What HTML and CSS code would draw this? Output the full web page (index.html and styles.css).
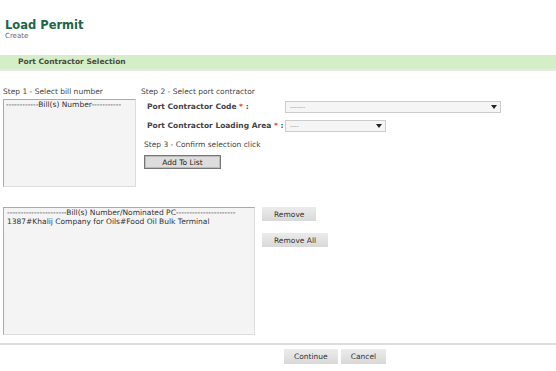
FILE: index.html
```html
<!DOCTYPE html>
<html lang="en">
<head>
  <meta charset="UTF-8">
  <title>Load Permit</title>
  <link rel="stylesheet" href="styles.css">
</head>
<body>
  <div class="page-head">
    <h1>Load Permit</h1>
    <div class="subtitle">Create</div>
  </div>

  <div class="section-bar">Port Contractor Selection</div>

  <div class="select-row">
    <div class="step1">
      <div class="step-label">Step 1 - Select bill number</div>
      <div class="listbox small-list">
        <div class="list-item">------------Bill(s) Number-----------</div>
      </div>
    </div>
    <div class="step2">
      <div class="step-label">Step 2 - Select port contractor</div>
      <div class="field-row">
        <label class="field-label">Port Contractor Code <span class="req">*</span> :</label>
        <div class="dropdown wide"><span>-------</span><span class="arrow"></span></div>
      </div>
      <div class="field-row">
        <label class="field-label">Port Contractor Loading Area <span class="req">*</span> :</label>
        <div class="dropdown narrow"><span>----</span><span class="arrow"></span></div>
      </div>
      <div class="step-label step3">Step 3 - Confirm selection click</div>
      <button class="add-btn">Add To List</button>
    </div>
  </div>

  <div class="result-row">
    <div class="listbox big-list">
      <div class="list-item">----------------------Bill(s) Number/Nominated PC----------------------</div>
      <div class="list-item">1387#Khalij Company for Oils#Food Oil Bulk Terminal</div>
    </div>
    <div class="side-btns">
      <button class="gray-btn">Remove</button>
      <button class="gray-btn">Remove All</button>
    </div>
  </div>

  <div class="footer">
    <button class="gray-btn">Continue</button>
    <button class="gray-btn">Cancel</button>
  </div>
</body>
</html>
```

FILE: styles.css
```css
body {
  margin: 0;
  font-family: "DejaVu Sans", Verdana, sans-serif;
  font-size: 7.5px;
  color: #333;
  background: white;
}
.page-head {
  padding: 18px 5px 0;
  height: 37px;
}
h1 {
  margin: 0;
  font-size: 11.5px;
  line-height: 14px;
  color: #1d6647;
  font-weight: bold;
}
.subtitle {
  font-size: 7px;
  color: #666;
  line-height: 8px;
}
.section-bar {
  background: #d4eec7;
  color: #4a4a40;
  font-weight: bold;
  font-size: 7.5px;
  line-height: 14px;
  padding-left: 18px;
  border-bottom: 2px solid #e8e8e8;
}
.select-row {
  display: flex;
  padding: 16px 0 0 3px;
  height: 100px;
}
.step1 {
  width: 133px;
}
.step-label {
  line-height: 10px;
  color: #444;
}
.listbox {
  background: #f4f4f4;
  border: 1px solid #aaa;
  border-right-color: #ddd;
  border-bottom-color: #ddd;
  box-sizing: border-box;
}
.small-list {
  margin-top: 2px;
  width: 133px;
  height: 88px;
}
.list-item {
  line-height: 9px;
  padding-left: 3px;
  color: #333;
}
.small-list .list-item {
  padding-left: 2px;
}
.step2 {
  margin-left: 5px;
}
.field-row {
  display: flex;
  align-items: center;
  height: 19px;
  margin-left: 6px;
}
.field-row:first-of-type {
  margin-top: 3px;
}
.field-label {
  width: 138px;
  font-weight: bold;
  color: #444;
}
.req {
  color: #e33;
}
.dropdown {
  display: flex;
  justify-content: space-between;
  align-items: center;
  height: 12px;
  box-sizing: border-box;
  border: 1px solid #ccc;
  background: #f5f5f5;
  padding: 0 3px 0 4px;
  font-size: 6px;
  color: #888;
}
.wide {
  width: 216px;
}
.narrow {
  width: 101px;
}
.arrow {
  width: 0;
  height: 0;
  border-left: 3px solid transparent;
  border-right: 3px solid transparent;
  border-top: 4px solid #222;
}
.step3 {
  margin: 5px 0 0 3px;
}
.add-btn {
  display: block;
  margin: 5px 0 0 3px;
  width: 77px;
  height: 14px;
  padding: 0;
  border: 1px solid #777;
  outline: 1px solid #bbb;
  outline-offset: -2px;
  background: #ddd;
  font-family: inherit;
  font-size: 7.5px;
  color: #222;
}
.result-row {
  display: flex;
  padding: 20px 0 0 3px;
  height: 128px;
}
.big-list {
  width: 252px;
  height: 128px;
}
.side-btns {
  margin-left: 7px;
  display: flex;
  flex-direction: column;
  align-items: flex-start;
  gap: 12px;
}
.gray-btn {
  height: 14px;
  padding: 0 12px;
  border: none;
  background: linear-gradient(#ececec, #d8d8d8);
  font-family: inherit;
  font-size: 7.5px;
  color: #333;
}
.footer {
  margin-top: 8px;
  border-top: 2px solid #ddd;
  padding: 4px 0 0 284px;
  display: flex;
  gap: 3px;
}
.footer .gray-btn {
  height: 15px;
  padding: 0 10px;
}
```
